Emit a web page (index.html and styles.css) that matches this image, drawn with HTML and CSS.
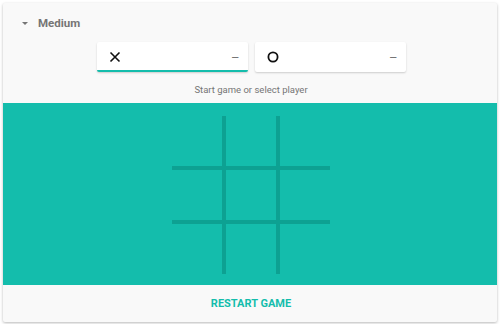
FILE: index.html
```html
<!DOCTYPE html>
<html lang="en">
<head>
    <meta charset="UTF-8">
    <meta name="viewport" content="width=device-width, initial-scale=1.0">
    <title>Tic Tac Toe</title>
    <link rel="stylesheet" href="styles.css">
</head>
<body>
<div class="game-card">
    <div class="level">
        <span class="level-arrow"></span>
        <span class="level-name">Medium</span>
    </div>

    <div class="players">
        <div class="player active">
            <svg class="mark" width="12" height="12" viewBox="0 0 12 12">
                <path d="M1.5 1.5 L10.5 10.5 M10.5 1.5 L1.5 10.5" stroke="#111" stroke-width="1.6" fill="none"/>
            </svg>
            <span class="score">–</span>
        </div>
        <div class="player">
            <svg class="mark" width="12" height="12" viewBox="0 0 12 12">
                <circle cx="6" cy="6" r="4.6" stroke="#111" stroke-width="1.8" fill="none"/>
            </svg>
            <span class="score">–</span>
        </div>
    </div>

    <p class="hint">Start game or select player</p>

    <div class="board">
        <div class="grid">
            <div class="cell"></div><div class="cell"></div><div class="cell"></div>
            <div class="cell"></div><div class="cell"></div><div class="cell"></div>
            <div class="cell"></div><div class="cell"></div><div class="cell"></div>
        </div>
    </div>

    <div class="footer">
        <button class="restart">RESTART GAME</button>
    </div>
</div>
</body>
</html>
```

FILE: styles.css
```css
:root {
    --teal: #14bdac;
    --dark-teal: #0da192;
    --grey-text: #757575;
    --card-bg: #f9f9f9;
}

* {
    margin: 0;
    padding: 0;
    box-sizing: border-box;
}

body {
    font-family: Roboto, 'Liberation Sans', sans-serif;
    background-color: #fff;
    padding: 3px;
}

.game-card {
    width: 494px;
    background-color: var(--card-bg);
    border-radius: 2px;
    box-shadow: 0 1px 3px rgba(0, 0, 0, 0.28);
    overflow: hidden;
}

.level {
    display: flex;
    align-items: center;
    height: 27px;
    padding: 13px 0 0 19px;
}

.level-arrow {
    width: 0;
    height: 0;
    border-left: 3px solid transparent;
    border-right: 3px solid transparent;
    border-top: 3px solid var(--grey-text);
    margin-right: 10px;
}

.level-name {
    font-size: 11.5px;
    line-height: 14px;
    font-weight: bold;
    color: var(--grey-text);
}

.players {
    display: flex;
    justify-content: center;
    gap: 7px;
    margin-top: 12px;
    padding-left: 2px;
}

.player {
    width: 151px;
    height: 30px;
    background-color: #fff;
    border-radius: 2px;
    box-shadow: 0 1px 2px rgba(0, 0, 0, 0.18);
    display: flex;
    align-items: center;
    justify-content: space-between;
    padding: 0 8px 0 12px;
}

.player.active {
    border-bottom: 2px solid var(--teal);
    padding-top: 2px;
}

.score {
    font-size: 13px;
    color: var(--grey-text);
}

.hint {
    margin-top: 11px;
    text-align: center;
    font-size: 9.5px;
    line-height: 13px;
    color: var(--grey-text);
    padding-left: 2px;
}

.board {
    margin-top: 7px;
    height: 182px;
    background-color: var(--teal);
    display: flex;
    align-items: center;
    justify-content: center;
    padding-left: 2px;
    padding-top: 1px;
}

.grid {
    display: grid;
    grid-template-columns: repeat(3, 50px);
    grid-template-rows: repeat(3, 50px);
    gap: 4px;
    background-color: var(--dark-teal);
}

.cell {
    background-color: var(--teal);
}

.footer {
    height: 37px;
    display: flex;
    align-items: center;
    justify-content: center;
}

.restart {
    background: none;
    border: none;
    font-family: Roboto, 'Liberation Sans', sans-serif;
    font-size: 11px;
    font-weight: bold;
    color: var(--teal);
    cursor: pointer;
    padding-left: 2px;
}
```
